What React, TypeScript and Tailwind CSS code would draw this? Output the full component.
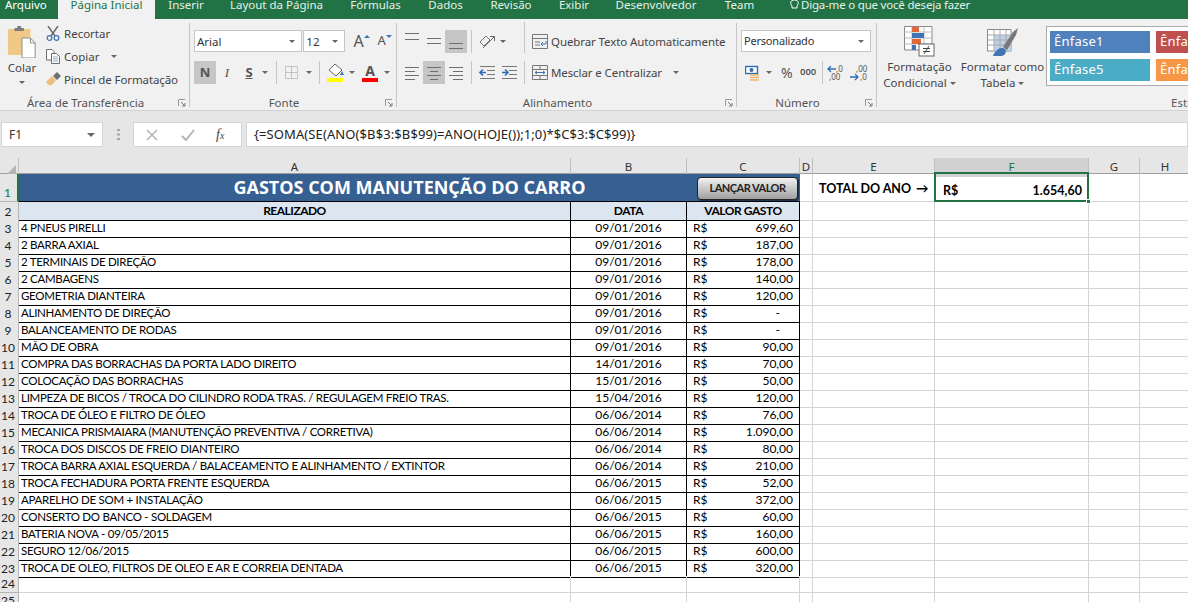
import type { ReactNode } from "react";

const tabs = [
  { name: "Arquivo", w: "w-[58px]", cls: "pl-[5px] justify-start" },
  { name: "Página Inicial", w: "w-[97px]", cls: "bg-[#f1f1f1] text-[#217346]" },
  { name: "Inserir", w: "w-[62px]" },
  { name: "Layout da Página", w: "w-[119px]" },
  { name: "Fórmulas", w: "w-[79px]" },
  { name: "Dados", w: "w-[61px]" },
  { name: "Revisão", w: "w-[70px]" },
  { name: "Exibir", w: "w-[56px]" },
  { name: "Desenvolvedor", w: "w-[108px]" },
  { name: "Team", w: "w-[59px]" },
];

const rows = [
  ["4 PNEUS PIRELLI", "09/01/2016", "699,60"],
  ["2 BARRA AXIAL", "09/01/2016", "187,00"],
  ["2 TERMINAIS DE DIREÇÃO", "09/01/2016", "178,00"],
  ["2 CAMBAGENS", "09/01/2016", "140,00"],
  ["GEOMETRIA DIANTEIRA", "09/01/2016", "120,00"],
  ["ALINHAMENTO DE DIREÇÃO", "09/01/2016", "-"],
  ["BALANCEAMENTO DE RODAS", "09/01/2016", "-"],
  ["MÃO DE OBRA", "09/01/2016", "90,00"],
  ["COMPRA DAS BORRACHAS DA PORTA LADO DIREITO", "14/01/2016", "70,00"],
  ["COLOCAÇÃO DAS BORRACHAS", "15/01/2016", "50,00"],
  ["LIMPEZA DE BICOS / TROCA DO CILINDRO RODA TRAS. / REGULAGEM FREIO TRAS.", "15/04/2016", "120,00"],
  ["TROCA DE ÓLEO E FILTRO DE ÓLEO", "06/06/2014", "76,00"],
  ["MECANICA PRISMAIARA (MANUTENÇÃO PREVENTIVA / CORRETIVA)", "06/06/2014", "1.090,00"],
  ["TROCA DOS DISCOS DE FREIO DIANTEIRO", "06/06/2014", "80,00"],
  ["TROCA BARRA AXIAL ESQUERDA / BALACEAMENTO E ALINHAMENTO / EXTINTOR", "06/06/2014", "210,00"],
  ["TROCA FECHADURA PORTA FRENTE ESQUERDA", "06/06/2015", "52,00"],
  ["APARELHO DE SOM + INSTALAÇÃO", "06/06/2015", "372,00"],
  ["CONSERTO DO BANCO - SOLDAGEM", "06/06/2015", "60,00"],
  ["BATERIA NOVA - 09/05/2015", "06/06/2015", "160,00"],
  ["SEGURO 12/06/2015", "06/06/2015", "600,00"],
  ["TROCA DE OLEO, FILTROS DE OLEO E AR E CORREIA DENTADA", "06/06/2015", "320,00"],
];

const cols = "grid grid-cols-[19px_552px_116px_113px_13px_122px_154px_51px_51px]";
const headCell = "flex items-center justify-center border-r border-[#c0c0c0] pb-[2px] text-[11.5px] text-[#333]";
const rowHead = "flex items-end justify-center border-r border-b border-[#b4b4b4] bg-[#e6e6e6] pr-[2px] text-[12px] leading-[16px] text-[#222]";
const blank = "border-r border-b border-[#d4d4d4]";

function Chev({ className = "" }: { className?: string }) {
  return <span className={`inline-block h-0 w-0 border-x-[3px] border-t-[3px] border-x-transparent border-t-[#666] ${className}`} />;
}

function VLine({ className = "" }: { className?: string }) {
  return <span className={`h-[23px] w-px bg-[#c6c6c6] ${className}`} />;
}

function Launcher() {
  return (
    <svg width="8" height="8" viewBox="0 0 8 8" className="absolute right-[3px] top-[8px]">
      <path d="M0.5 7V0.5H7" fill="none" stroke="#999" />
      <path d="M3 3L6.5 6.5M7 4V7H4" fill="none" stroke="#777" />
    </svg>
  );
}

function Group({ w, label, children }: { w: string; label: string; children: ReactNode }) {
  return (
    <section className={`flex h-[84px] shrink-0 flex-col border-r border-[#c6c6c6] ${w}`}>
      <div className="min-h-0 flex-1">{children}</div>
      <div className="relative h-[16px] pr-[18px] text-center text-[11.5px] leading-[24px] text-[#555]">
        {label}
        <Launcher />
      </div>
    </section>
  );
}

// horizontal text-align glyph, the y list is the rows of lines
function Lines({ ys, xs }: { ys: number[]; xs: [number, number][] }) {
  return (
    <svg width="22" height="23" viewBox="0 0 22 23">
      {ys.map((y, i) => (
        <path key={y} d={`M${xs[i % xs.length][0]} ${y}.5H${xs[i % xs.length][1]}`} stroke="#6f6f6f" />
      ))}
    </svg>
  );
}

function IconBtn({ active, children }: { active?: boolean; children: ReactNode }) {
  return (
    <span className={`flex h-[23px] w-[22px] shrink-0 items-center justify-center ${active ? "bg-[#c6c6c6]" : ""}`}>
      {children}
    </span>
  );
}

function Ribbon() {
  return (
    <div className="flex h-[92px] items-start overflow-hidden whitespace-nowrap border-b border-[#d2d2d2] bg-[#f1f1f1] pt-[4px] text-[11.5px] text-[#444] [font-family:'Noto_Sans',sans-serif]">
      <Group w="w-[190px]" label="Área de Transferência">
        <div className="flex">
          <div className="mr-[2px] flex w-[44px] flex-col items-center pt-[3px]">
            <svg width="30" height="32" viewBox="0 0 32 32" preserveAspectRatio="none">
              <path d="M1 3H25V29H1z" fill="#f0c987" />
              <path d="M8 2H11V0H15V2H18V5H8z" fill="#7c7c7c" />
              <path d="M16 12H25L30 17V32H16z" fill="#fff" stroke="#8a8a8a" />
              <path d="M25 12V17H30" fill="none" stroke="#8a8a8a" />
            </svg>
            <span className="mt-[2px] leading-[16px]">Colar</span>
            <Chev className="mt-[5px]" />
          </div>
          <div className="-mt-px flex flex-col">
            <div className="flex h-[23px] items-center gap-[4px]">
              <svg width="14" height="15" viewBox="0 0 14 15">
                <path d="M2 0L9 10M12 0L5 10" stroke="#666" strokeWidth="1.4" />
                <circle cx="3.5" cy="12" r="2.4" fill="none" stroke="#3f74b5" strokeWidth="1.2" />
                <circle cx="10.5" cy="12" r="2.4" fill="none" stroke="#3f74b5" strokeWidth="1.2" />
              </svg>
              <span>Recortar</span>
            </div>
            <div className="flex h-[23px] items-center gap-[4px]">
              <svg width="14" height="15" viewBox="0 0 14 15">
                <path d="M.5.5H6L8 2.5V11H.5z" fill="#fff" stroke="#6d6d6d" />
                <path d="M5.5 4.5H10.5L13.5 7.5V14.5H5.5z" fill="#fff" stroke="#6d6d6d" />
                <path d="M7 8H12M7 10H12M7 12H12" stroke="#8fa9c9" />
              </svg>
              <span>Copiar</span>
              <Chev className="ml-[8px]" />
            </div>
            <div className="flex h-[23px] items-center gap-[4px]">
              <svg width="16" height="15" viewBox="0 0 16 15" className="-mr-[2px]">
                <path d="M0 10L6 4L10 8L6 13C4 14 1 12 0 10z" fill="#eec07d" />
                <path d="M7 4L11 0L15 4L11 8z" fill="#6f6f6f" />
              </svg>
              <span className="tracking-[-0.1px]">Pincel de Formatação</span>
            </div>
          </div>
        </div>
      </Group>

      <Group w="w-[207px]" label="Fonte">
        <div className="flex h-[29px] items-end pl-[4px]">
          <div className="flex h-[22px] w-[110px] items-center justify-between border border-[#c6c6c6] bg-white pl-[2px] pr-[6px] pt-px text-[#333]">
            Arial <Chev />
          </div>
          <div className="ml-px flex h-[22px] w-[42px] items-center justify-between border border-[#c6c6c6] bg-white pl-[2px] pr-[6px] pt-px text-[#333]">
            12 <Chev />
          </div>
          <span className="ml-[5px] flex h-[22px] w-[24px] items-center justify-center text-[16px] text-[#555]">
            A<span className="mb-[10px] inline-block h-0 w-0 border-x-[3px] border-b-[3px] border-x-transparent border-b-[#3f74b5]" />
          </span>
          <span className="flex h-[22px] w-[23px] items-center justify-center text-[13px] text-[#555]">
            A<span className="mb-[10px] inline-block h-0 w-0 border-x-[3px] border-t-[3px] border-x-transparent border-t-[#3f74b5]" />
          </span>
        </div>
        <div className="mt-[9px] flex h-[23px] items-center pl-[4px] text-[#555]">
          <IconBtn active><b className="text-[13px]">N</b></IconBtn>
          <IconBtn><i className="text-[13px] [font-family:'Liberation_Serif',serif]">I</i></IconBtn>
          <IconBtn><b className="text-[13px] underline">S</b></IconBtn>
          <Chev className="ml-[2px]" />
          <VLine className="ml-[8px]" />
          <svg width="13" height="13" viewBox="0 0 13 13" className="ml-[8px]">
            <path d="M.5.500H12.500V12.500H.5zM6.500 .5V12.500M.5 6.500H12.500" fill="none" stroke="#999" strokeDasharray="1 1" />
          </svg>
          <Chev className="ml-[8px]" />
          <VLine className="ml-[7px]" />
          <svg width="17" height="19" viewBox="0 0 17 19" className="ml-[7px]">
            <path d="M8 1L15 7L9 13L2 7z" fill="#fff" stroke="#666" />
            <path d="M15 8L17 12H13z" fill="#3f74b5" />
            <rect y="15" width="16" height="4" fill="#ffff00" />
          </svg>
          <Chev className="ml-[5px]" />
          <span className="ml-[7px] flex w-[16px] flex-col items-center">
            <b className="text-[14px] leading-[15px]">A</b>
            <span className="h-[4px] w-[16px] bg-[#ff0000]" />
          </span>
          <Chev className="ml-[6px]" />
        </div>
      </Group>

      <Group w="w-[340px]" label="Alinhamento">
        <div className="flex h-[30px] items-end pl-[4px]">
          <IconBtn><Lines ys={[3, 9]} xs={[[4, 18]]} /></IconBtn>
          <IconBtn><Lines ys={[8, 13]} xs={[[4, 18]]} /></IconBtn>
          <IconBtn active><Lines ys={[13, 18]} xs={[[4, 18]]} /></IconBtn>
          <VLine className="ml-[4px] w-px" />
          <span className="ml-[4px] flex h-[23px] w-[22px] items-center justify-center">
            <svg width="17" height="15" viewBox="0 0 17 15">
              <path d="M1 8L7 2L11 6L5 12z" fill="none" stroke="#777" />
              <path d="M4 14L15 3M11 2.5H15.5V7" fill="none" stroke="#666" />
            </svg>
          </span>
          <Chev className="mb-[10px] ml-[2px]" />
          <VLine className="ml-[18px] h-[31px]" />
          <span className="ml-[7px] flex h-[23px] items-center gap-[3px] tracking-[-0.1px] text-[#444]">
            <svg width="16" height="15" viewBox="0 0 16 15">
              <path d="M.5.5H15.5V14.5H.5z" fill="none" stroke="#777" />
              <path d="M.5 4.5H15.5M3 8H8M3 11H8" stroke="#777" />
              <path d="M14 7V10H9M11 8L9 10L11 12" fill="none" stroke="#3f74b5" />
            </svg>
            Quebrar Texto Automaticamente
          </span>
        </div>
        <div className="mt-[8px] flex h-[23px] items-center pl-[4px]">
          <IconBtn><Lines ys={[6, 10, 14, 18]} xs={[[4, 18], [4, 14]]} /></IconBtn>
          <IconBtn active><Lines ys={[6, 10, 14, 18]} xs={[[4, 18], [7, 15]]} /></IconBtn>
          <IconBtn><Lines ys={[6, 10, 14, 18]} xs={[[4, 18], [8, 18]]} /></IconBtn>
          <VLine className="ml-[4px]" />
          <span className="ml-[4px] flex h-[23px] w-[22px] items-center justify-center">
            <svg width="17" height="14" viewBox="0 0 17 14">
              <path d="M1 .5H16M8 4.5H16M8 8.5H16M1 12.5H16" stroke="#777" />
              <path d="M7 6.5H1M4 3.5L1 6.5L4 9.5" fill="none" stroke="#2f6db5" strokeWidth="1.6" />
            </svg>
          </span>
          <span className="flex h-[23px] w-[22px] items-center justify-center">
            <svg width="17" height="14" viewBox="0 0 17 14">
              <path d="M1 .5H16M8 4.5H16M8 8.5H16M1 12.5H16" stroke="#777" />
              <path d="M1 6.5H7M4 3.5L7 6.5L4 9.5" fill="none" stroke="#2f6db5" strokeWidth="1.6" />
            </svg>
          </span>
          <VLine className="ml-[4px]" />
          <span className="ml-[7px] flex h-[23px] items-center gap-[3px] tracking-[-0.1px] text-[#444]">
            <svg width="16" height="15" viewBox="0 0 16 15">
              <path d="M.5.5H15.5V14.5H.5zM.5 4.5H15.5M.5 10.5H15.5M8 .5V4.5M8 10.5V14.5" fill="none" stroke="#777" />
              <path d="M3 7.5H13M5 6L3 7.5L5 9M11 6L13 7.5L11 9" fill="none" stroke="#3f74b5" />
            </svg>
            Mesclar e Centralizar
            <Chev className="ml-[8px]" />
          </span>
        </div>
      </Group>

      <Group w="w-[140px]" label="Número">
        <div className="flex h-[29px] items-end pl-[4px]">
          <div className="flex h-[22px] w-[130px] items-center justify-between border border-[#c6c6c6] bg-white pl-[2px] pr-[6px] pt-px text-[11px] tracking-[-0.2px] text-[#333]">
            Personalizado <Chev />
          </div>
        </div>
        <div className="mt-[9px] flex h-[23px] items-center pl-[8px] text-[#555]">
          <svg width="16" height="16" viewBox="0 0 16 16">
            <rect x=".5" y="1.5" width="12" height="7" fill="#fff" stroke="#2f6db5" strokeWidth="1.4" />
            <circle cx="6.5" cy="5" r="2" fill="#2f6db5" />
            <path d="M5 10H14M5 12.500H14M5 15H14" stroke="#eeb96e" strokeWidth="1.6" />
          </svg>
          <Chev className="ml-[5px]" />
          <span className="ml-[9px] w-[13px] text-[14px]">%</span>
          <span className="ml-[6px] w-[16px] text-[9.5px] font-semibold">000</span>
          <VLine className="ml-[6px]" />
          <svg width="22" height="16" viewBox="0 0 22 16" className="ml-[4px]">
            <path d="M9 4H1M4 1L1 4L4 7" fill="none" stroke="#2f6db5" strokeWidth="1.3" />
            <text x="9" y="7" fontSize="8" fill="#555">,0</text>
            <text x="2" y="15" fontSize="8" fill="#555">,00</text>
          </svg>
          <svg width="22" height="16" viewBox="0 0 22 16">
            <text x="7" y="7" fontSize="8" fill="#555">,00</text>
            <path d="M1 12H9M6 9L9 12L6 15" fill="none" stroke="#2f6db5" strokeWidth="1.3" />
            <text x="11" y="15" fontSize="8" fill="#555">,0</text>
          </svg>
        </div>
      </Group>

      <div className="flex h-[84px] shrink-0 flex-col">
        <div className="flex">
          <div className="flex w-[85px] shrink-0 flex-col items-center pt-[3px]">
            <svg width="31" height="31" viewBox="0 0 31 31">
              <path d="M.5.5H28V24H.5z" fill="#fff" stroke="#888" />
              <path d="M8 .5V24M.5 6H28M.5 12H28M.5 18H28M20 .5V24" stroke="#bbb" />
              <rect x="8" y="1" width="7" height="5" fill="#e2683c" />
              <rect x="8" y="7" width="12" height="5" fill="#3f74b5" />
              <rect x="8" y="13" width="9" height="5" fill="#e2683c" />
              <rect x="8" y="19" width="4" height="5" fill="#3f74b5" />
              <rect x="15" y="18" width="15" height="12" fill="#fff" stroke="#666" />
              <path d="M19 22.5H26M19 25.5H26M25 20L20 28" stroke="#444" />
            </svg>
            <span className="mt-[2px] leading-[16px]">Formatação</span>
            <span className="flex items-center gap-[3px] leading-[16px]">Condicional <Chev /></span>
          </div>
          <div className="ml-[-2px] flex w-[85px] shrink-0 flex-col items-center pt-[3px]">
            <svg width="31" height="31" viewBox="0 0 31 31">
              <path d="M.5 3.5H24V25H.5z" fill="#fff" stroke="#888" />
              <rect x="7" y="9" width="17" height="16" fill="#bcd0e6" />
              <path d="M7 3.5V25M13 3.5V25M19 3.5V25M.5 9H24M.5 14H24M.5 19H24" stroke="#aaa" />
              <path d="M16 21L26 6L31 2L29 9L20 24z" fill="#777" />
              <path d="M6 30C8 24 14 20 18 23C20 26 18 30 14 30z" fill="#3f74b5" />
            </svg>
            <span className="mt-[2px] leading-[16px]">Formatar como</span>
            <span className="flex items-center gap-[3px] leading-[16px]">Tabela <Chev /></span>
          </div>
          <div className="ml-px mt-[3px] grid h-[60px] w-[230px] shrink-0 grid-cols-[100px_100px] gap-x-[6px] gap-y-[6px] border border-[#ababab] bg-white py-[4px] pl-[3px] text-[13px] tracking-[0.25px] text-white">
            <span className="flex h-[22px] items-center bg-[#4f81bd] pl-[4px]">Ênfase1</span>
            <span className="flex h-[22px] items-center bg-[#c0504d] pl-[4px]">Ênfase2</span>
            <span className="flex h-[22px] items-center bg-[#4bacc6] pl-[4px]">Ênfase5</span>
            <span className="flex h-[22px] items-center bg-[#f79646] pl-[4px]">Ênfase6</span>
          </div>
        </div>
        <div className="mt-auto h-[16px] pl-[294px] text-[11.5px] leading-[24px] text-[#555]">Estilos</div>
      </div>
    </div>
  );
}

function FormulaBar() {
  return (
    <div className="flex h-[47px] items-end bg-[#e6e6e6] pb-[11px] pl-px [font-family:'Noto_Sans',sans-serif]">
      <div className="flex h-[25px] w-[102px] items-center justify-between border border-[#d4d4d4] bg-white pl-[7px] pr-[7px] text-[12px] text-[#333]">
        F1
        <Chev className="border-x-[4px] border-t-[4px]" />
      </div>
      <span className="flex h-[25px] w-[30px] items-center justify-center">
        <svg width="3" height="11" viewBox="0 0 3 11">
          <path d="M0 1H3M0 5.500H3M0 10H3" stroke="#a6a6a6" strokeWidth="2" />
        </svg>
      </span>
      <div className="flex h-[25px] w-[109px] items-center border border-[#d4d4d4] bg-white pl-[12px]">
        <svg width="12" height="12" viewBox="0 0 12 12">
          <path d="M1 1L11 11M11 1L1 11" stroke="#b5b5b5" strokeWidth="1.5" />
        </svg>
        <svg width="14" height="12" viewBox="0 0 14 12" className="ml-[23px]">
          <path d="M1 7L5 11L13 1" fill="none" stroke="#b5b5b5" strokeWidth="2" />
        </svg>
        <span className="ml-[21px] text-[14px] italic text-[#444] [font-family:'Liberation_Serif',serif]">
          f<span className="text-[10px]">x</span>
        </span>
      </div>
      <div className="ml-[4px] flex h-[25px] flex-1 items-center border border-[#d4d4d4] bg-white pl-[7px] text-[13px] tracking-[0.1px] text-[#222]">
        {"{=SOMA(SE(ANO($B$3:$B$99)=ANO(HOJE());1;0)*$C$3:$C$99)}"}
      </div>
    </div>
  );
}

function Sheet() {
  return (
    <div className="[font-family:'Lato',sans-serif] text-[12px] text-black">
      <div className={`${cols} h-[16px] border-b border-[#9f9f9f] bg-[#e6e6e6] [font-family:'Noto_Sans',sans-serif]`}>
        <div className="flex items-end justify-end border-r border-[#c0c0c0] pb-[2px] pr-[2px]">
          <span className="h-0 w-0 border-b-[10px] border-l-[10px] border-b-[#b4b4b4] border-l-transparent" />
        </div>
        {["A", "B", "C", "D", "E"].map((c) => (
          <div key={c} className={headCell}>{c}</div>
        ))}
        <div className={`${headCell} bg-[#d2d2d2] text-[#217346]`}>F</div>
        <div className={headCell}>G</div>
        <div className={headCell}>H</div>
      </div>

      <div className={`${cols} h-[28px]`}>
        <div className={`${rowHead} border-r-2 border-r-[#217346] bg-[#d2d2d2] text-[#217346]`}>1</div>
        <div className="relative col-span-3 flex items-center justify-center border-b border-black bg-[#366092] text-[18px] font-bold text-white [font-family:'Open_Sans',sans-serif]">
          GASTOS COM MANUTENÇÃO DO CARRO
          <button className="absolute right-[2px] top-[3px] flex h-[23px] w-[101px] items-center justify-center rounded-[4px] border border-[#222] bg-gradient-to-b from-[#f2f2f2] to-[#a0a0a0] text-[11px] font-bold tracking-[-0.5px] text-[#222] shadow-[1px_1px_1px_rgba(0,0,0,0.5)] [font-family:'Lato',sans-serif]">
            LANÇAR VALOR
          </button>
        </div>
        <div className={blank} />
        <div className={`${blank} flex items-center gap-[5px] pl-[6px] pt-[3px] text-[12.5px] font-bold`}>
          TOTAL DO ANO <span className="leading-none">→</span>
        </div>
        <div className="relative flex items-end justify-between border-r border-b border-[#d4d4d4] pl-[8px] pr-[6px] text-[12.5px] font-bold">
          <span>R$</span>
          <span>1.654,60</span>
          <span className="absolute -left-px -top-[2px] -right-[1px] -bottom-[1px] border-2 border-[#217346]" />
          <span className="absolute -bottom-[3px] -right-[3px] h-[5px] w-[5px] border border-white bg-[#217346]" />
        </div>
        <div className={blank} />
        <div className={blank} />
      </div>

      <div className={`${cols} h-[17px]`}>
        <div className={rowHead}>2</div>
        <div className="flex items-center justify-center border-r border-b border-black bg-[#dce6f1] font-bold tracking-[-0.5px]">REALIZADO</div>
        <div className="flex items-center justify-center border-r border-b border-black bg-[#dce6f1] font-bold tracking-[-0.4px]">DATA</div>
        <div className="flex items-center justify-center border-r border-b border-black bg-[#dce6f1] font-bold tracking-[-0.45px]">VALOR GASTO</div>
        <div className={blank} />
        <div className={blank} />
        <div className={blank} />
        <div className={blank} />
        <div className={blank} />
      </div>

      {rows.map(([desc, date, val], i) => (
        <div key={i} className={`${cols} h-[17px]`}>
          <div className={rowHead}>{i + 3}</div>
          <div className="flex items-center overflow-hidden whitespace-nowrap border-r border-b border-black pl-[2px] text-[11.5px] tracking-[-0.28px]">{desc}</div>
          <div className="flex items-center justify-center border-r border-b border-black">{date}</div>
          <div className={`flex items-center justify-between border-r border-b border-black pl-[6px] ${val === "-" ? "pr-[19px]" : "pr-[6px]"}`}>
            <span>R$</span>
            <span>{val}</span>
          </div>
          <div className={blank} />
          <div className={blank} />
          <div className={blank} />
          <div className={blank} />
          <div className={blank} />
        </div>
      ))}

      {[24, 25].map((n) => (
        <div key={n} className={`${cols} h-[17px]`}>
          <div className={rowHead}>{n}</div>
          <div className={blank} />
          <div className={blank} />
          <div className={blank} />
          <div className={blank} />
          <div className={blank} />
          <div className={blank} />
          <div className={blank} />
          <div className={blank} />
        </div>
      ))}
    </div>
  );
}

export default function App() {
  return (
    <div className="h-[602px] w-[1188px] overflow-hidden bg-white">
      <div className="flex h-[19px] items-center overflow-hidden bg-[#217346] text-[11.5px] text-white [font-family:'Noto_Sans',sans-serif]">
        {tabs.map((t) => (
          <div key={t.name} className={`flex h-[19px] shrink-0 justify-center leading-[9px] ${t.w} ${t.cls ?? "text-[#e6f0ea]"}`}>
            {t.name}
          </div>
        ))}
        <span className="ml-[21px] flex items-center gap-[1px] pb-[10px] tracking-[-0.2px] text-[#e6f0ea]">
          <svg width="9" height="11" viewBox="0 0 9 11" className="mr-[1px]">
            <path d="M2 7C0 5 0 1 4.500 1C9 1 9 5 7 7V9H2z" fill="none" stroke="#fff" />
          </svg>
          Diga-me o que você deseja fazer
        </span>
      </div>
      <Ribbon />
      <FormulaBar />
      <Sheet />
    </div>
  );
}
